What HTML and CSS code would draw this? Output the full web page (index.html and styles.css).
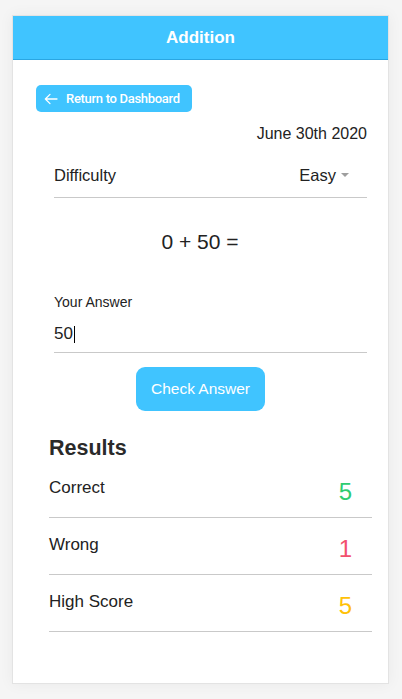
FILE: index.html
```html
<!DOCTYPE html>
<html>
<head>
<meta charset="utf-8">
<link rel="stylesheet" href="styles.css">
</head>
<body>
<div class="page">
  <div class="card">
    <header class="topbar">Addition</header>
    <main class="content">
      <a class="back-btn" href="#">
        <svg class="back-icon" viewBox="0 0 24 24" width="16" height="16"><path d="M21 12H3.5M10.5 5 3.5 12 10.5 19" fill="none" stroke="#fff" stroke-width="1.9" stroke-linecap="round" stroke-linejoin="round"/></svg>
        <span>Return to Dashboard</span>
      </a>
      <div class="date">June 30th 2020</div>
      <div class="select-row">
        <span>Difficulty</span>
        <span class="select-val">Easy <span class="caret-down"></span></span>
      </div>
      <div class="equation">0 + 50 =</div>
      <div class="field">
        <div class="field-label">Your Answer</div>
        <div class="field-input">50<span class="cursor"></span></div>
      </div>
      <div class="check-wrap"><button class="check-btn">Check Answer</button></div>
      <section class="results">
        <h2 class="results-title">Results</h2>
        <div class="result-row"><span class="label">Correct</span><span class="num green">5</span></div>
        <div class="result-row"><span class="label">Wrong</span><span class="num red">1</span></div>
        <div class="result-row"><span class="label">High Score</span><span class="num amber">5</span></div>
      </section>
    </main>
  </div>
</div>
</body>
</html>
```
FILE: styles.css
```css
* { box-sizing: border-box; }
html, body { margin: 0; padding: 0; }
body {
  background: #f5f5f5;
  font-family: "Liberation Sans", Arial, sans-serif;
  color: #222;
  width: 402px;
  height: 699px;
  overflow: hidden;
}
.page { padding: 15px 13px 0 12px; }
.card {
  width: 377px;
  height: 669px;
  background: #fff;
  border: 1px solid #e3e3e3;
  box-shadow: 0 0 14px rgba(0,0,0,0.05);
}
.topbar {
  height: 44px;
  background: #40c4ff;
  border-bottom: 1px solid #2aa6e2;
  color: #fff;
  font-weight: bold;
  font-size: 17px;
  display: flex;
  align-items: center;
  justify-content: center;
}
.content { padding: 25px 16px 0 23px; }
.back-btn {
  display: inline-flex;
  align-items: center;
  height: 27px;
  padding: 0 12px 0 7px;
  gap: 7px;
  border-radius: 5px;
  background: #40c4ff;
  color: #fff;
  text-decoration: none;
  font-family: Roboto, "Liberation Sans", sans-serif;
  font-weight: 500;
  font-size: 13px;
  letter-spacing: -0.3px;
}
.back-icon { display: block; }
.date {
  margin-top: 13px;
  text-align: right;
  padding-right: 5px;
  font-size: 16px;
  line-height: 18px;
  color: #222;
}
.select-row {
  margin: 10px 5px 0 18px;
  height: 45px;
  border-bottom: 1px solid #c9c9c9;
  display: flex;
  align-items: center;
  justify-content: space-between;
  font-size: 16.5px;
  color: #222;
}
.select-val { display: inline-flex; align-items: center; gap: 5px; padding-right: 18px; }
.caret-down {
  width: 0; height: 0;
  border-left: 4px solid transparent;
  border-right: 4px solid transparent;
  border-top: 4px solid #9e9e9e;
}
.equation {
  margin-top: 32px;
  padding-right: 8px;
  text-align: center;
  font-size: 21px;
  line-height: 23px;
  color: #222;
}
.field { margin: 41px 5px 0 18px; }
.field-label { font-size: 14px; line-height: 16px; color: #222; }
.field-input {
  margin-top: 14px;
  height: 29px;
  padding-bottom: 8px;
  font-size: 17px;
  line-height: 20px;
  border-bottom: 1px solid #c9c9c9;
  display: flex;
  align-items: center;
}
.cursor {
  display: inline-block;
  width: 1px;
  height: 17px;
  background: #000;
  margin-left: 1px;
}
.check-wrap { display: flex; justify-content: center; margin-top: 14px; padding-right: 7px; }
.check-btn {
  width: 129px;
  height: 44px;
  border: none;
  border-radius: 9px;
  background: #40c4ff;
  color: #fff;
  font-family: "Liberation Sans", Arial, sans-serif;
  font-size: 15.5px;
}
.results { margin: 25px 0 0 13px; }
.results-title {
  margin: 0 0 1px;
  font-size: 21.5px;
  line-height: 24px;
  font-weight: bold;
  color: #2a2a2a;
}
.result-row {
  height: 57px;
  border-bottom: 1px solid #c9c9c9;
  display: flex;
  align-items: center;
  justify-content: space-between;
}
.result-row .label { font-size: 17px; color: #222; margin-top: -2px; }
.result-row .num { font-size: 24px; margin-right: 20px; margin-top: 6px; }
.green { color: #2ecc71; }
.red { color: #f2506e; }
.amber { color: #ffc107; }
```
